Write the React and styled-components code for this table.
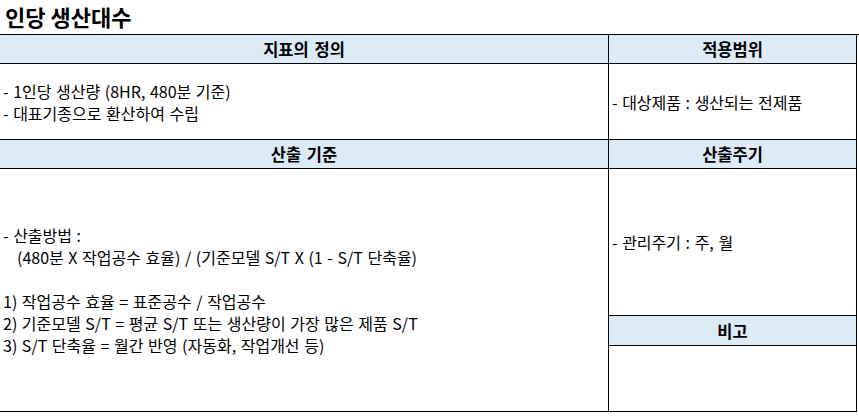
import React from 'react';
import styled, { createGlobalStyle } from 'styled-components';

const GlobalStyle = createGlobalStyle`
  html, body {
    margin: 0;
    padding: 0;
    background: #fff;
  }
  body {
    font-family: "Noto Sans CJK KR", "Noto Sans", sans-serif;
    color: #000;
  }
`;

const S = {
  Page: styled.div`
    width: 859px;
    height: 417px;
    overflow: hidden;
  `,
  Title: styled.h1`
    display: flex;
    align-items: center;
    height: 34px;
    margin: 0;
    padding: 0 0 2px 5px;
    box-sizing: border-box;
    font-size: 22px;
    font-weight: 700;
  `,
  Table: styled.div`
    display: grid;
    grid-template-columns: 609px 248px;
    grid-template-rows: 29px 76px 29px 147px 30px 66px;
    border-top: 1px solid #000;
  `,
  Cell: styled.div`
    box-sizing: border-box;
    display: flex;
    flex-direction: column;
    justify-content: center;
    padding: 0 2px 0 3px;
    border-bottom: 1px solid #000;
    border-right: 1px solid #000;
    grid-row: ${({ $rows }) => $rows || 'auto'};
    font-size: 16px;
    line-height: 22px;
    word-spacing: 1px;
    white-space: pre;
  `,
  Head: styled.div`
    box-sizing: border-box;
    display: flex;
    align-items: center;
    justify-content: center;
    border-bottom: 1px solid #000;
    border-right: 1px solid #000;
    background: #ddebf7;
    font-size: 16.5px;
    font-weight: 700;
    word-spacing: 2px;
  `,
  Line: styled.div`
    padding-left: ${({ $indent }) => ($indent ? '14px' : '0')};
    min-height: 22px;
  `,
};

const App = () => (
  <S.Page>
    <GlobalStyle />
    <S.Title>인당 생산대수</S.Title>
    <S.Table>
      <S.Head>지표의 정의</S.Head>
      <S.Head>적용범위</S.Head>
      <S.Cell>
        <S.Line>- 1인당 생산량 (8HR, 480분 기준)</S.Line>
        <S.Line>- 대표기종으로 환산하여 수립</S.Line>
      </S.Cell>
      <S.Cell>
        <S.Line>- 대상제품 : 생산되는 전제품</S.Line>
      </S.Cell>
      <S.Head>산출 기준</S.Head>
      <S.Head>산출주기</S.Head>
      <S.Cell $rows="4 / span 3">
        <S.Line>- 산출방법 :</S.Line>
        <S.Line $indent>(480분 X 작업공수 효율) / (기준모델 S/T X (1 - S/T 단축율)</S.Line>
        <S.Line />
        <S.Line>1) 작업공수 효율 = 표준공수 / 작업공수</S.Line>
        <S.Line>2) 기준모델 S/T = 평균 S/T 또는 생산량이 가장 많은 제품 S/T</S.Line>
        <S.Line>3) S/T 단축율 = 월간 반영 (자동화, 작업개선 등)</S.Line>
      </S.Cell>
      <S.Cell>
        <S.Line>- 관리주기 : 주, 월</S.Line>
      </S.Cell>
      <S.Head>비고</S.Head>
      <S.Cell />
    </S.Table>
  </S.Page>
);

export default App;
